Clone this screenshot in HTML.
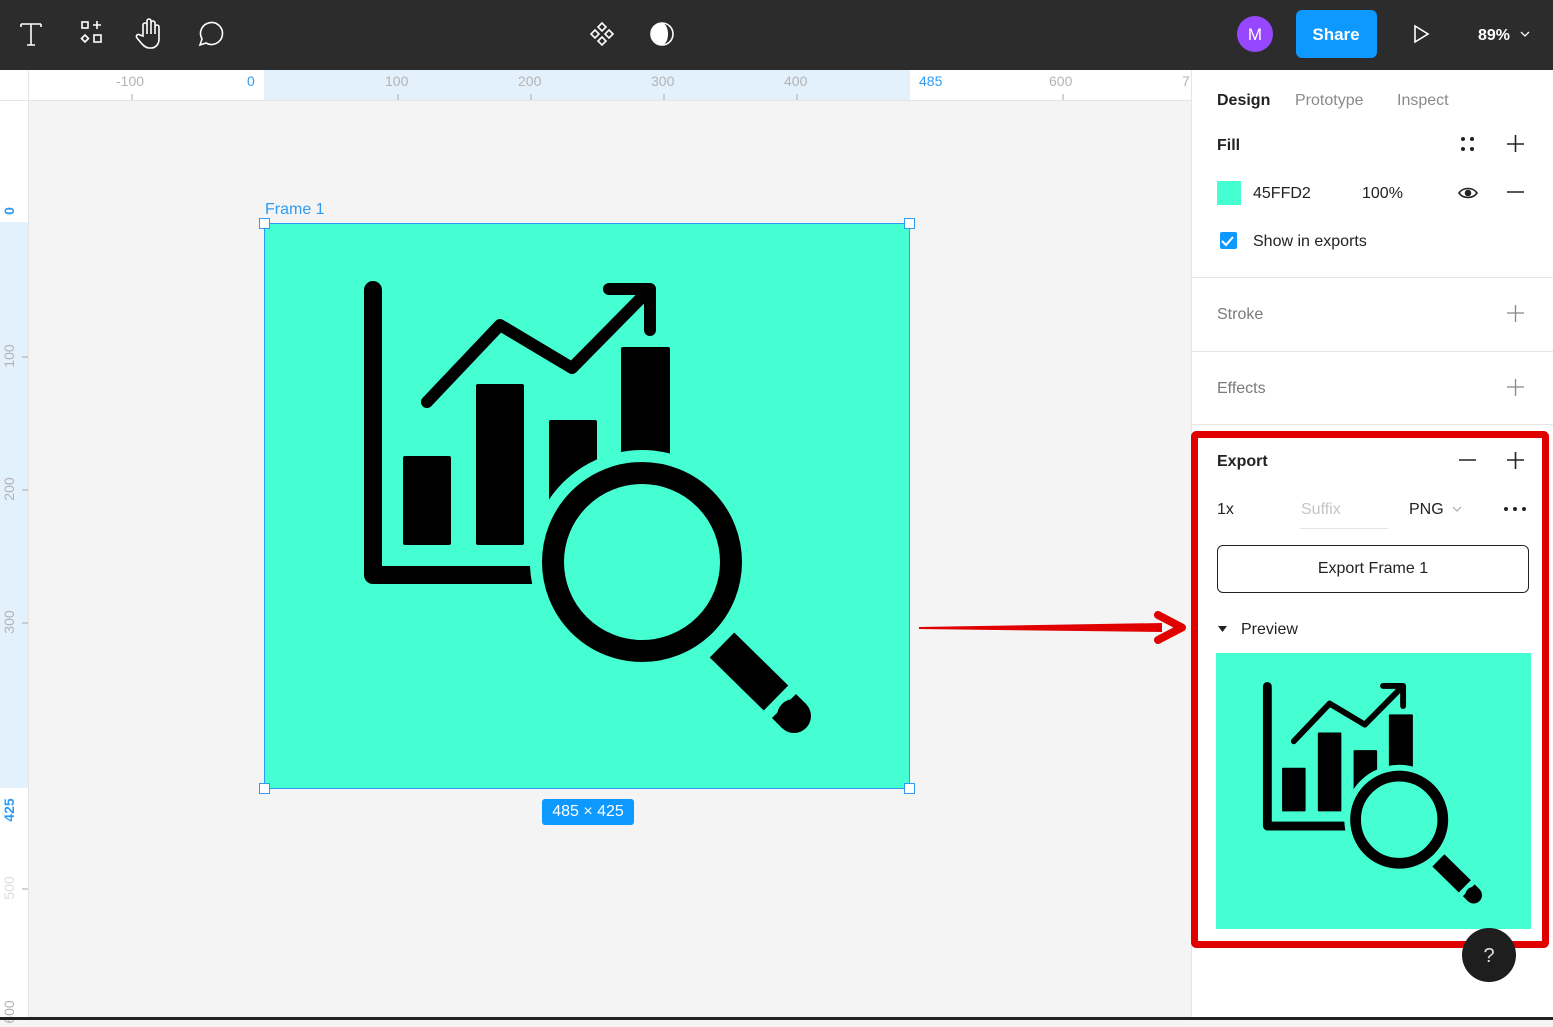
<!DOCTYPE html>
<html><head><meta charset="utf-8">
<style>
*{margin:0;padding:0;box-sizing:border-box}
body{width:1553px;height:1020px;position:relative;overflow:hidden;background:#f4f4f4;font-family:"Liberation Sans",sans-serif;}
.abs{position:absolute}
.top{left:0;top:0;width:1553px;height:70px;background:#2c2c2c}
.rt{left:0;top:70px;width:1191px;height:31px;background:#fff;border-bottom:1px solid #e5e5e5}
.rl{left:0;top:70px;width:29px;height:950px;background:#fff;border-right:1px solid #e5e5e5}
.rl0{position:absolute;left:0;top:70px;width:29px;height:31px;background:#fff;border-right:1px solid #e5e5e5;border-bottom:1px solid #e5e5e5;z-index:2}
.lbl{position:absolute;font-size:14px;color:#b3b3b3}
.vl{position:absolute;font-size:14px;color:#b3b3b3;transform:rotate(-90deg);transform-origin:center;width:30px;text-align:center;line-height:16px}
.panel{left:1191px;top:70px;width:362px;height:950px;background:#fff;border-left:1px solid #e5e5e5}
.t{position:absolute;font-size:16px;color:#222}
.sep{position:absolute;left:0;width:362px;height:1px;background:#e5e5e5}
</style></head><body>
<div class="abs top"></div>
<svg class="abs" style="left:0;top:0" width="1553" height="70">
 <g fill="none" stroke="#fff" stroke-width="1.6">
  <path d="M21 24H41M31 24V45M27 45H35M21 24v3M41 24v3"/>
  <rect x="82" y="22" width="6" height="6"/><path d="M97 21v8M93 25h8"/>
  <path d="M85 35l3.5 3.5L85 42l-3.5-3.5z"/><rect x="94" y="35" width="7" height="7"/>
  <path d="M143 36V25a2 2 0 014 0v9V21a2 2 0 014 0v13V23a2 2 0 014 0v11V27a2 2 0 014 0v12c0 6-4 9-8 9h-2c-3 0-5-2-7-4l-5-6a2 2 0 013-3z"/>
  <path d="M200 45l2-6a11 11 0 1 1 4 4z"/>
  <path d="M602 23l4 4-4 4-4-4zM602 37l4 4-4 4-4-4zM595 30l4 4-4 4-4-4zM609 30l4 4-4 4-4-4z"/>
  <circle cx="662" cy="34" r="11"/>
 </g>
 <path d="M662 23a11 11 0 0 0 0 22a6 11 0 0 0 0-22z" fill="#fff"/>
 <circle cx="1255" cy="34" r="18" fill="#9747ff"/>
 <text x="1255" y="40" fill="#fff" font-size="17" text-anchor="middle" font-family="Liberation Sans">M</text>
 <rect x="1296" y="10" width="81" height="48" rx="6" fill="#0d99ff"/>
 <text x="1336" y="40" fill="#fff" font-size="17" font-weight="bold" text-anchor="middle" font-family="Liberation Sans">Share</text>
 <path d="M1415 26l13 8-13 8z" fill="none" stroke="#fff" stroke-width="1.6"/>
 <text x="1478" y="40" fill="#fff" font-size="16" font-weight="bold" font-family="Liberation Sans">89%</text>
 <path d="M1521 32l4 4 4-4" fill="none" stroke="#fff" stroke-width="1.3"/>
</svg>
<div class="abs rt"></div>
<div class="abs" style="left:264px;top:70px;width:646px;height:30px;background:#e3f1fd"></div>
<div class="abs rl"></div>
<div class="abs" style="left:0;top:222px;width:28px;height:566px;background:#e3f1fd"></div>
<div class="rl0"></div>
<div class="lbl" style="left:116px;top:73px">-100</div>
<div class="lbl" style="left:247px;top:73px;color:#2f9bf5">0</div>
<div class="lbl" style="left:385px;top:73px">100</div>
<div class="lbl" style="left:518px;top:73px">200</div>
<div class="lbl" style="left:651px;top:73px">300</div>
<div class="lbl" style="left:784px;top:73px">400</div>
<div class="lbl" style="left:919px;top:73px;color:#2f9bf5">485</div>
<div class="lbl" style="left:1049px;top:73px">600</div>
<div class="lbl" style="left:1182px;top:73px">7</div>
<svg class="abs" style="left:0;top:0" width="1191" height="1020">
 <g stroke="#aaa" stroke-width="1">
  <path d="M132 94v6M398 94v6M531 94v6M664 94v6M797 94v6M1063 94v6"/>
  <path d="M22 357h6M22 490h6M22 623h6M22 889h6"/>
 </g>
</svg>
<div class="vl" style="left:-6px;top:203px;color:#2f9bf5;font-weight:bold">0</div>
<div class="vl" style="left:-6px;top:348px">100</div>
<div class="vl" style="left:-6px;top:481px">200</div>
<div class="vl" style="left:-6px;top:614px">300</div>
<div class="vl" style="left:-6px;top:802px;color:#2f9bf5;font-weight:bold">425</div>
<div class="vl" style="left:-6px;top:880px;color:#ddd">500</div>
<div class="vl" style="left:-6px;top:1004px">600</div>

<div class="abs" style="left:264px;top:223px;width:646px;height:566px;background:#45ffd2;border:1px solid #2f9bf5"></div>
<div class="abs" style="left:265px;top:201px;font-size:16px;color:#2f9bf5">Frame 1</div>
<div class="abs" style="left:542px;top:799px;width:92px;height:26px;background:#0d99ff;border-radius:3px;color:#fff;font-size:16px;text-align:center;line-height:26px">485 × 425</div>
<div class="abs" style="left:259px;top:218px;width:11px;height:11px;background:#fff;border:1.5px solid #2f9bf5"></div>
<div class="abs" style="left:904px;top:218px;width:11px;height:11px;background:#fff;border:1.5px solid #2f9bf5"></div>
<div class="abs" style="left:259px;top:783px;width:11px;height:11px;background:#fff;border:1.5px solid #2f9bf5"></div>
<div class="abs" style="left:904px;top:783px;width:11px;height:11px;background:#fff;border:1.5px solid #2f9bf5"></div>

<div class="abs panel">
 <div class="t" style="left:25px;top:22px;font-weight:bold;color:#222">Design</div>
 <div class="t" style="left:103px;top:22px;color:#8a8a8a">Prototype</div>
 <div class="t" style="left:205px;top:22px;color:#8a8a8a">Inspect</div>
 <div class="t" style="left:25px;top:67px;font-weight:bold">Fill</div>
 <div class="abs" style="left:25px;top:111px;width:24px;height:24px;background:#45ffd2"></div>
 <div class="t" style="left:61px;top:115px">45FFD2</div>
 <div class="t" style="left:170px;top:115px">100%</div>
 <div class="abs" style="left:28px;top:162px;width:17px;height:17px;background:#0d99ff;border-radius:2px"></div>
 <div class="t" style="left:61px;top:163px">Show in exports</div>
 <div class="sep" style="top:207px"></div>
 <div class="t" style="left:25px;top:236px;color:#7a7a7a">Stroke</div>
 <div class="sep" style="top:281px"></div>
 <div class="t" style="left:25px;top:310px;color:#7a7a7a">Effects</div>
 <div class="sep" style="top:354px"></div>
 <div class="t" style="left:25px;top:383px;font-weight:bold">Export</div>
 <div class="t" style="left:25px;top:431px">1x</div>
 <div class="t" style="left:109px;top:431px;color:#c4c4c4">Suffix</div>
 <div class="abs" style="left:108px;top:458px;width:88px;height:1px;background:#e5e5e5"></div>
 <div class="t" style="left:217px;top:431px">PNG</div>
 <div class="abs" style="left:25px;top:475px;width:312px;height:48px;border:1px solid #222;border-radius:6px;text-align:center;line-height:46px;font-size:16px;color:#222">Export Frame 1</div>
 <div class="t" style="left:49px;top:551px">Preview</div>
 <div class="abs" style="left:24px;top:583px;width:315px;height:276px;background:#45ffd2"></div>
</div>
<svg class="abs" style="left:0;top:0" width="1553" height="1020">
 <g fill="none" stroke="#222" stroke-width="1.6">
  <path d="M1507 144h17M1515.5 135v17M1507 192h17M1507 460h17M1515.5 452v17M1459 460h17"/>
  <path d="M1507 313h17M1515.5 305v17M1507 387h17M1515.5 379v17" stroke="#888" stroke-width="1.3"/>
  <path d="M1459 193c4-6 14-6 18 0c-4 6-14 6-18 0z"/><circle cx="1468" cy="193" r="2.5" fill="#222"/>
  <path d="M1453 507l4 4 4-4" stroke="#aaa" stroke-width="1.2"/>
  <path d="M1222 241l4 4 7-8" stroke="#fff" stroke-width="2"/>
 </g>
 <g fill="#222"><circle cx="1463" cy="139" r="2"/><circle cx="1472" cy="139" r="2"/><circle cx="1463" cy="149" r="2"/><circle cx="1472" cy="149" r="2"/>
  <circle cx="1506" cy="509" r="2"/><circle cx="1515" cy="509" r="2"/><circle cx="1524" cy="509" r="2"/>
  <path d="M1218 626h9l-4.5 6z"/></g>

 <defs><g id="ic">
  <g fill="#000">
   <rect x="403" y="456" width="48" height="89" rx="2"/>
   <rect x="476" y="384" width="48" height="161" rx="2"/>
   <rect x="549" y="420" width="48" height="150" rx="2"/>
   <rect x="621" y="347" width="49" height="150" rx="2"/>
  </g>
  <path d="M373 290V575H570" fill="none" stroke="#000" stroke-width="18" stroke-linecap="round" stroke-linejoin="round"/>
  <polyline points="427,402 500,325 572,368 645,294" fill="none" stroke="#000" stroke-width="12" stroke-linecap="round" stroke-linejoin="round"/>
  <polyline points="609,289 650,289 650,330" fill="none" stroke="#000" stroke-width="12" stroke-linecap="round" stroke-linejoin="round"/>
  <circle cx="642" cy="562" r="112" fill="#45ffd2"/>
  <circle cx="642" cy="562" r="89" fill="none" stroke="#000" stroke-width="22"/>
  <line x1="722" y1="645" x2="776" y2="698" stroke="#000" stroke-width="35"/>
  <line x1="784" y1="706" x2="794" y2="716" stroke="#000" stroke-width="34"/>
  <circle cx="794" cy="716" r="17" fill="#000"/>
 </g></defs>
 <use href="#ic"/>
 <g transform="translate(1084.6 544.3) scale(0.49)"><use href="#ic"/></g>

 <path d="M919 627L1162 623L1162 632L919 629Z" fill="#e00000"/>
 <polyline points="1158,615 1182,627.5 1158,640" fill="none" stroke="#e00000" stroke-width="8" stroke-linecap="round" stroke-linejoin="round"/>
 <rect x="1194.5" y="434.5" width="351" height="510" fill="none" stroke="#e00000" stroke-width="7" rx="2"/>
 <circle cx="1489" cy="955" r="27" fill="#1e1e1e"/>
 <text x="1489" y="962" fill="#ddd" font-size="20" text-anchor="middle" font-family="Liberation Sans">?</text>
 <rect x="0" y="1017" width="1553" height="3" fill="#222"/>
</svg>
</body></html>
